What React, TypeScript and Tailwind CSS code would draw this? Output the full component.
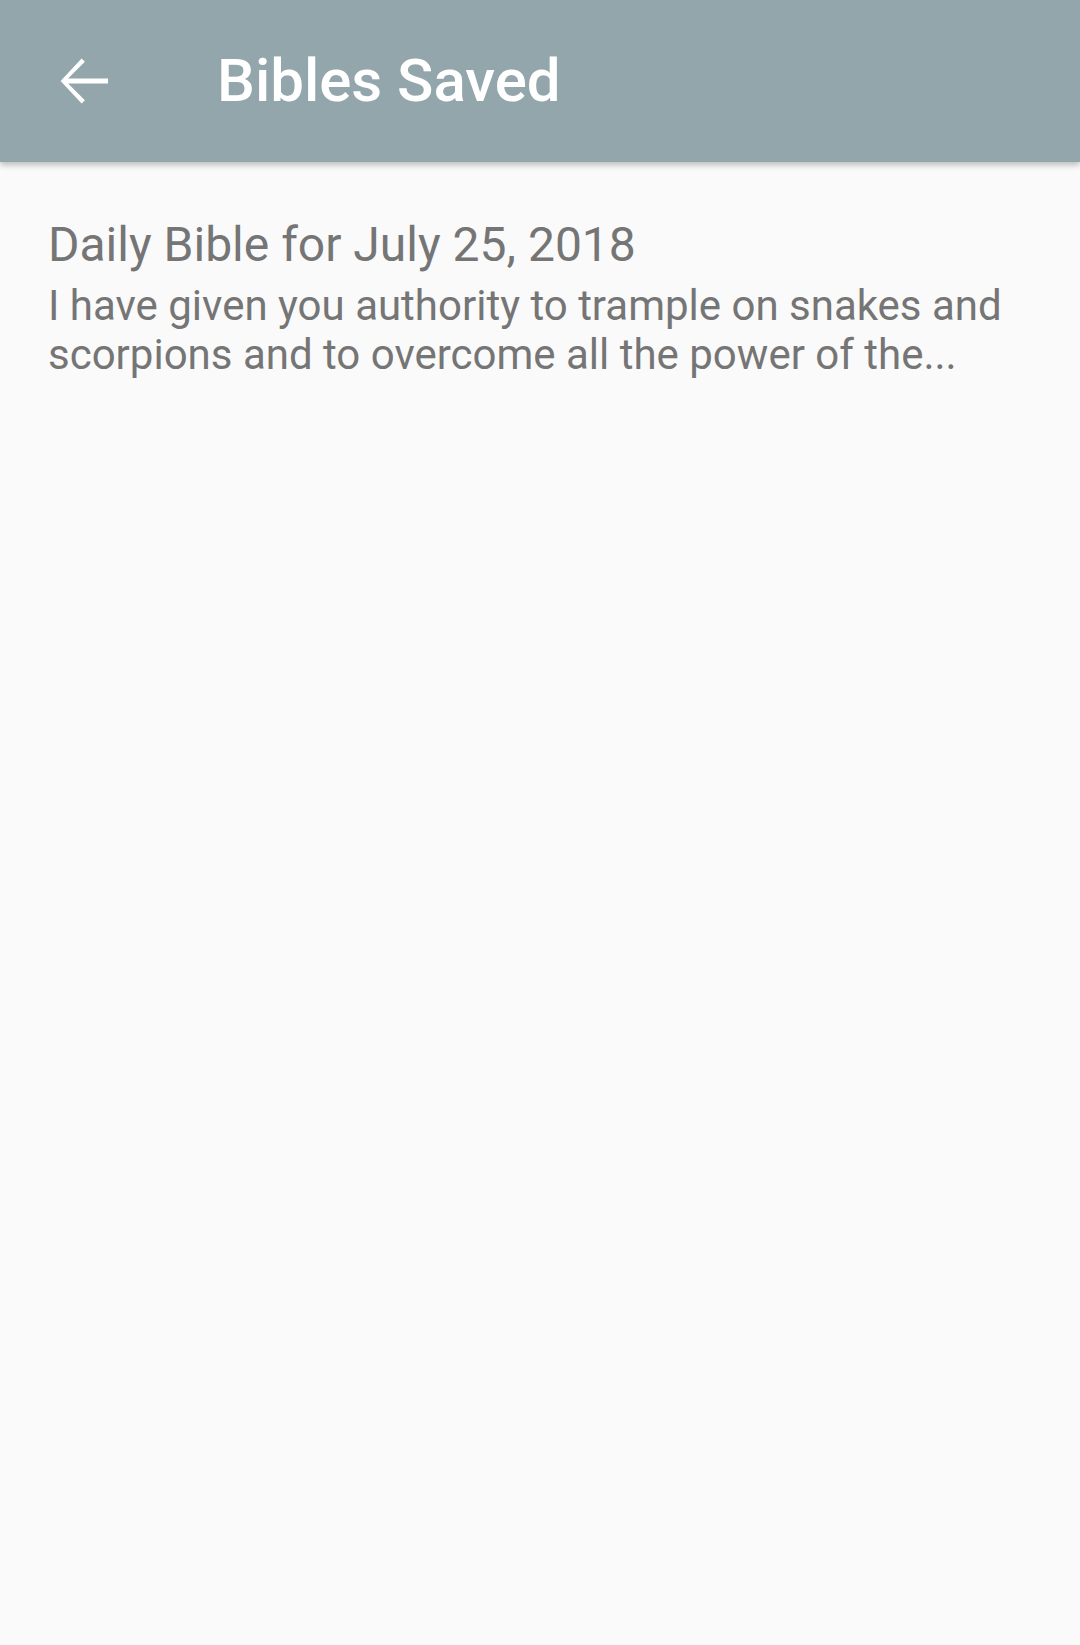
export default function App() {
  return (
    <div className="min-h-[1645px] w-full bg-[#fafafa]" style={{ fontFamily: "Roboto, 'Noto Sans', sans-serif" }}>
      <header className="relative z-10 flex h-[162px] items-center bg-[#93a6ac] pl-[48px] shadow-[0_3px_6px_rgba(0,0,0,0.25)]">
        <svg width="72" height="72" viewBox="0 0 24 24" fill="#ffffff" aria-label="Back">
          <path d="M20 11.2H6.7l5.6-5.6-1.1-1.1L4.2 12l7 7.5 1.1-1.1-5.6-5.6H20z" />
        </svg>
        <h1 className="ml-[97px] text-[60px] font-medium text-white">Bibles Saved</h1>
      </header>

      <main className="px-[48px] pt-[55px]">
        <div className="text-[48px] leading-[56px] text-[#757575]">Daily Bible for July 25, 2018</div>
        <p className="mt-[8px] text-[42px] leading-[49px] text-[#757575]">
          I have given you authority to trample on snakes and scorpions and to overcome all the power of the...
        </p>
      </main>
    </div>
  );
}
